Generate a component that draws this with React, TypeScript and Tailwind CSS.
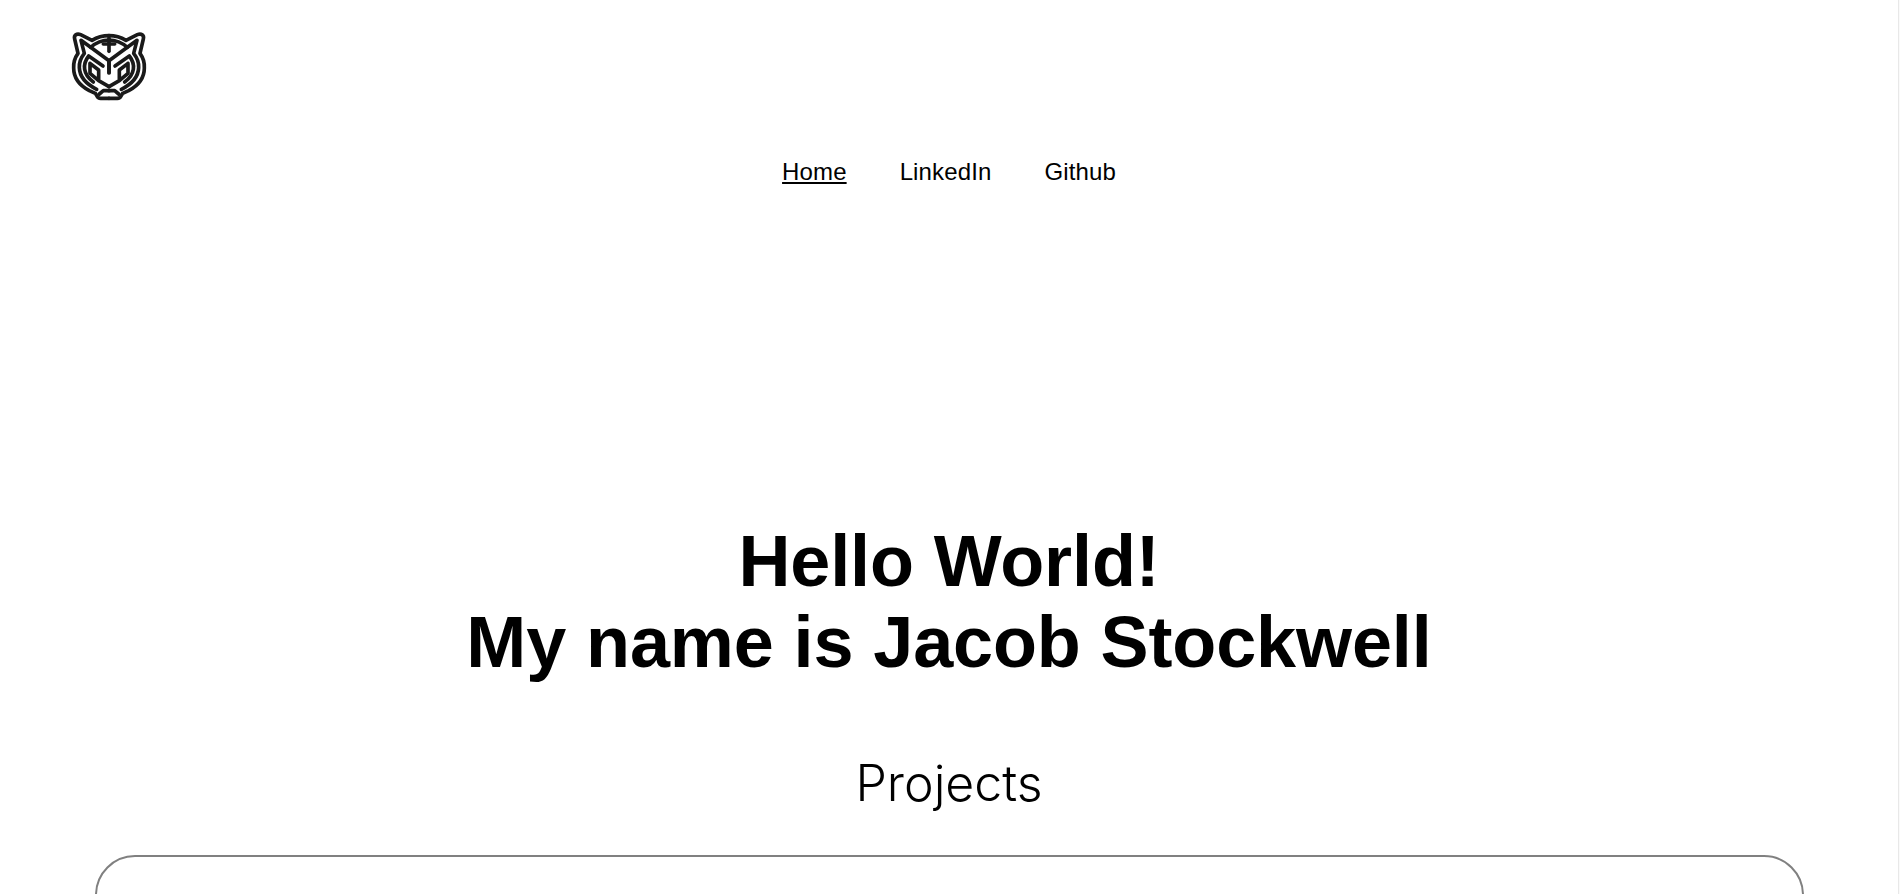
function TigerHalf() {
  return (
    <>
      <path d="M177 47 C158 47 141 52 126 61 L92 44 C80 39 71 46 74 57 L84 100 C74 114 70 128 71 144 C71 172 88 196 118 212 L136 220 L141 228 C143 233 147 235 152 235 L177 235" />
      <path d="M177 60 C156 60 138 68 122 82 L93 61 L103 100 C92 114 87 128 88 143 C89 170 108 192 140 208" />
      <path d="M122 82 L177 122 L177 158" />
      <path d="M159 138 L116 108 C105 122 102 136 104 148 C106 162 116 176 130 186" />
      <path d="M120 130 L120 160 L146 182 L177 200 M120 130 L146 150 L146 176" />
      <path d="M177 212 L160 212 L148 222" />
    </>
  );
}

function TigerLogo() {
  return (
    <svg viewBox="0 0 360 270" className="h-[90px] w-[120px]" fill="none" stroke="#1a1a1a" strokeWidth="11" strokeLinejoin="round" strokeLinecap="round">
      <TigerHalf />
      <g transform="translate(354 0) scale(-1 1)">
        <TigerHalf />
      </g>
      <path d="M177 54 L177 94" />
      <path d="M160 72 L194 72" />
    </svg>
  );
}

export default function App() {
  return (
    <div className="flex h-[894px] overflow-hidden bg-white font-['Liberation_Sans',sans-serif] text-black">
      <main className="min-w-0 flex-1">
        <header className="h-[120px] pl-[50px] pt-[20px]">
          <TigerLogo />
        </header>
        <nav className="mt-[38px] flex justify-center gap-[53px] text-[24px] leading-[28px] tracking-[0.13px]">
          <a className="underline">Home</a>
          <a>LinkedIn</a>
          <a>Github</a>
        </nav>
        <h1 className="mt-[335px] text-center text-[72px] font-bold leading-[81px] tracking-[-0.12px]">
          Hello World!
          <br />
          My name is Jacob Stockwell
        </h1>
        <h2 className="mt-[64px] text-center font-['Inter',sans-serif] text-[50px] font-light leading-[72px]">Projects</h2>
        <div className="ml-[95px] mr-[94px] mt-[36px] h-[300px] rounded-[40px] border-2 border-[#808080]" />
      </main>
      <aside className="w-[2px] border-l border-[#e8e8e8] bg-[#fafafa]" />
    </div>
  );
}
